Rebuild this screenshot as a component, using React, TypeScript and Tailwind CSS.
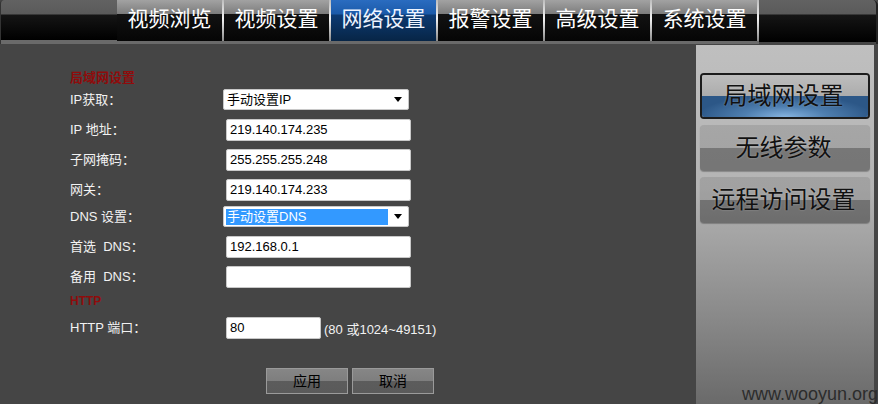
import React from "react";

const TABS = ["视频浏览", "视频设置", "网络设置", "报警设置", "高级设置", "系统设置"];
const ACTIVE_TAB = 2;

const SIDE = [
  { name: "局域网设置", active: true, top: "mt-[28px]" },
  { name: "无线参数", active: false, top: "mt-[6px]" },
  { name: "远程访问设置", active: false, top: "mt-[6px]" },
];

const FONT = "font-['Liberation_Sans','Noto_Sans_CJK_SC',sans-serif]";

function Label({ children }: { children: React.ReactNode }) {
  return <div className="w-[153px] shrink-0 text-[13px] text-[#f2f2f2]">{children}</div>;
}

function TextBox({ value, w = "w-[185px]" }: { value: string; w?: string }) {
  return (
    <div
      className={`ml-[3px] h-[22px] ${w} bg-white border border-[#c8c8c8] rounded-[2px] pl-[3px] flex items-center text-[13px] text-black`}
    >
      {value}
    </div>
  );
}

function SelectBox({ value, selected }: { value: string; selected?: boolean }) {
  return (
    <div className="h-[21px] w-[186px] bg-white border border-[#c8c8c8] rounded-[2px] flex items-center pl-[2px] pr-[6px] text-[13px] text-black">
      <div
        className={`h-[16px] flex items-center pl-[1px] ${
          selected ? "w-[162px] bg-[#3399ff] text-white" : ""
        }`}
      >
        {value}
      </div>
      <div className="ml-auto w-0 h-0 border-l-[4px] border-r-[4px] border-t-[5px] border-l-transparent border-r-transparent border-t-black" />
    </div>
  );
}

export default function App() {
  return (
    <div className={`w-[878px] h-[404px] bg-[#454545] overflow-hidden relative ${FONT}`}>
      {/* top navigation bar */}
      <div className="h-[44px] flex rounded-t-[4px] border-l border-[#333] bg-[linear-gradient(to_bottom,#626262_0px,#5a5a5a_14px,#151515_15px,#000_40px,#6a6a6a_40px,#6a6a6a_44px)]">
        <div className="w-[116px] shrink-0" />
        {TABS.map((t, i) => (
          <div key={t} className="flex shrink-0">
            <div
              className={`w-[105px] h-[41px] flex items-center justify-center pb-[3px] text-[21px] ${
                i === ACTIVE_TAB
                  ? "text-[#eef4ff] bg-[linear-gradient(to_bottom,#2a6cc0_0px,#1b5aa9_14px,#0d3a72_15px,#072546_41px)]"
                  : "text-white bg-[linear-gradient(to_bottom,#a2a2a2_0px,#7c7c7c_14px,#121212_14px,#050505_41px)]"
              }`}
            >
              {t}
            </div>
            <div className="w-[2px] h-[41px] bg-[linear-gradient(to_bottom,#bdbdbd,#f4f4f4_45%,#8a8a8a)]" />
          </div>
        ))}
        <div className="flex-1 rounded-tr-[5px] border-r-2 border-[#222] bg-[linear-gradient(to_bottom,#626262_0px,#5a5a5a_14px,#151515_15px,#000_42px,#444_42px)]" />
      </div>

      <div className="flex h-[360px]">
        {/* form */}
        <div className="flex-1 pl-[70px] flex flex-col">
          <div className="mt-[27px] h-[14px] flex items-center text-[13px] font-bold text-[#8f0c0c]">局域网设置</div>

          <div className="mt-[4px] h-[21px] flex items-center">
            <Label>IP获取：</Label>
            <SelectBox value="手动设置IP" />
          </div>
          <div className="mt-[9px] h-[22px] flex items-center">
            <Label>IP 地址：</Label>
            <TextBox value="219.140.174.235" />
          </div>
          <div className="mt-[8px] h-[22px] flex items-center">
            <Label>子网掩码：</Label>
            <TextBox value="255.255.255.248" />
          </div>
          <div className="mt-[8px] h-[22px] flex items-center">
            <Label>网关：</Label>
            <TextBox value="219.140.174.233" />
          </div>
          <div className="mt-[5px] h-[21px] flex items-center">
            <Label>DNS 设置：</Label>
            <SelectBox value="手动设置DNS" selected />
          </div>
          <div className="mt-[9px] h-[22px] flex items-center">
            <Label>首选&nbsp; DNS：</Label>
            <TextBox value="192.168.0.1" />
          </div>
          <div className="mt-[8px] h-[22px] flex items-center">
            <Label>备用&nbsp; DNS：</Label>
            <TextBox value="" />
          </div>
          <div className="mt-[6px] h-[14px] flex items-center text-[12px] font-bold text-[#8f0c0c]">HTTP</div>
          <div className="mt-[9px] h-[22px] flex items-center">
            <Label>HTTP 端口：</Label>
            <TextBox value="80" w="w-[95px]" />
            <span className="ml-[3px] mt-[3px] text-[13px] text-[#f2f2f2]">(80 或1024~49151)</span>
          </div>

          <div className="mt-[29px] ml-[196px] flex gap-[4px]">
            {["应用", "取消"].map((b) => (
              <div
                key={b}
                className="w-[82px] h-[26px] border border-[#9a9a9a] flex items-center justify-center text-[14px] text-black bg-[linear-gradient(to_bottom,#868686_0%,#7e7e7e_50%,#5c5c5c_50%,#5a5a5a_100%)]"
              >
                {b}
              </div>
            ))}
          </div>
        </div>

        {/* side menu */}
        <div className="w-[178px] mr-[4px] mt-[1px] shrink-0 flex flex-col items-center bg-[linear-gradient(to_bottom,#bfbfbf_0%,#b4b4b4_40%,#8a8a8a_75%,#6a6a6a_100%)]">
          {SIDE.map((s) => (
            <div
              key={s.name}
              className={`${s.top} w-[170px] h-[46px] rounded-[4px] relative overflow-hidden flex items-center justify-center ${
                s.active ? "border-2 border-[#1c1c1c]" : "shadow-[0_1px_1px_rgba(0,0,0,0.25)]"
              }`}
            >
              <div className="absolute inset-0 flex flex-col">
                {s.active ? (
                  <>
                    <div className="flex-1 bg-[linear-gradient(to_bottom,#bdbdbd,#acacac)]" />
                    <div className="flex-1 bg-[radial-gradient(ellipse_at_50%_100%,#86b4e0_0%,#4f7fb0_35%,#2c5787_75%)]" />
                  </>
                ) : (
                  <>
                    <div className="flex-1 bg-black/10" />
                    <div className="flex-1 bg-black/35" />
                  </>
                )}
              </div>
              <span className="relative -ml-[3px] text-[24px] text-[#111] [text-shadow:0_0_2px_rgba(255,255,255,0.35)]">
                {s.name}
              </span>
            </div>
          ))}
        </div>
      </div>

      <div className="absolute right-0 bottom-[1px] text-[18px] leading-none text-[#2c2c2c] font-['Liberation_Sans',sans-serif]">
        www.wooyun.org
      </div>
    </div>
  );
}
